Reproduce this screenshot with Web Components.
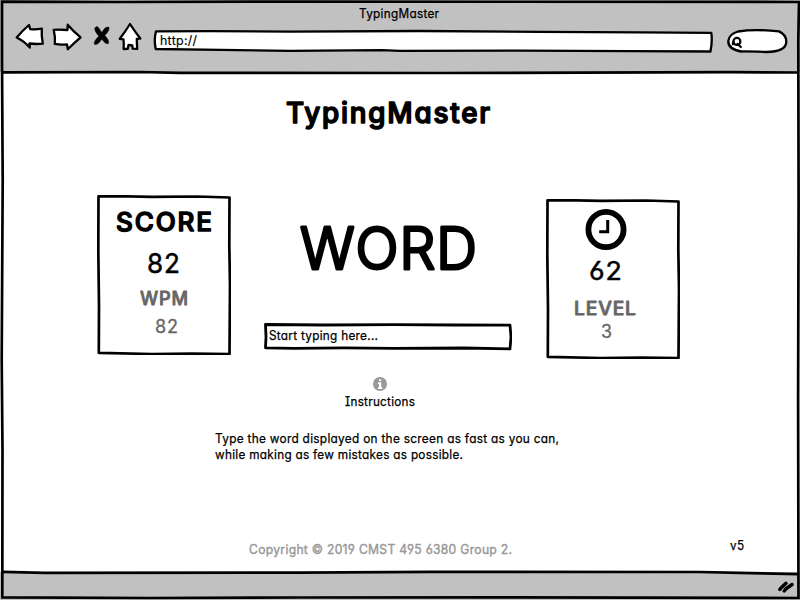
<!DOCTYPE html>
<html lang="en"><head><meta charset="utf-8"><title>TypingMaster</title>
<style>html,body{margin:0;width:800px;height:600px;overflow:hidden;background:#fff;font-family:Inter,Lato,sans-serif}</style></head>
<body><typing-app></typing-app>
<script>
// A line of lettering fitted to a given width, with softly rounded strokes.
class FitText extends HTMLElement{
  connectedCallback(){
    const g=(n,d)=>this.getAttribute(n)??d;
    const w=+g('w'),s=+g('size',13),k=+g('ink',0.25),gap=+g('gap',.3);
    this.attachShadow({mode:'open'}).innerHTML=`<style>
    :host{display:block;flex:none;width:${w}px;height:${s}px}
    svg{display:block;overflow:visible}
    text{font-family:Inter,Lato,sans-serif;font-feature-settings:"cv11","cv08","cv03","cv04";font-size:${s}px;letter-spacing:${gap}px;font-weight:${g('weight',400)};fill:${g('color','#000')};stroke:${g('color','#000')};stroke-width:${k};stroke-linejoin:round;stroke-linecap:round}
    </style><svg width="${w}" height="${s}"><text x="0" y="${s*.8}" textLength="${w+gap}" lengthAdjust="spacingAndGlyphs">${this.textContent}</text></svg>`;
  }
}
customElements.define('fit-text',FitText);

const define=(name,html)=>customElements.define(name,class extends HTMLElement{
  constructor(){super();this.attachShadow({mode:'open'}).innerHTML=html}
});

define('nav-icons',`<style>:host{display:block;width:128px;height:32px;flex:none}svg{display:block}</style>
<svg width="128" height="32" viewBox="15 22 128 32" fill="#fff" stroke="#000" stroke-width="2.3" stroke-linejoin="round" stroke-linecap="round">
<path d="M16.7 37.5Q22 31 29 25L30.2 29.2Q36 29.8 41.8 28.6Q41.3 36 42.8 43.6Q36 44.4 29.5 43.5L29.8 47.6Q24 41 16.7 37.5Z"/>
<path d="M53.7 29.8Q60 29.5 67.5 30L67.7 24.7Q73 31 80.6 37.3Q74 43 67.8 49.2L67 44.4Q60 45 54.8 43.8Q55.5 37 53.7 29.8Z"/>
<path fill="#000" stroke-width=".5" d="M94.9 28.2Q96 25.8 98 27L101.8 32.5Q105.5 26 109 27.3Q110 30 104.8 35.6Q109.3 40 108.6 43.3Q106 45.2 101.8 39Q98 45.6 94.4 44.2Q93.3 41.5 98.8 36.2Q94 30.5 94.9 28.2Z"/>
<path d="M130 24Q134.5 31 140.3 38.5L136.8 38.8Q136.8 43 137.2 48.8L132.6 48.7L132.3 45.3L128.5 45L127.7 48.9L123.6 49Q124 44 123.5 39.3L119.8 38.8Q125 32 130 24Z"/></svg>`);

define('address-bar',`<style>:host{display:grid;width:560px;height:24px;flex:none}svg{grid-area:1/1;display:block}::slotted(*){grid-area:1/1;margin:6px 0 0 7px}</style>
<svg width="560" height="24" viewBox="153 29 560 24" fill="#fff" stroke="#000" stroke-width="2.3" stroke-linejoin="round"><path d="M156 31.3L210 31.2L290 31.6L420 31L540 31.9L640 32.3L711.3 32.8Q712.5 41 710.5 51.5L630 51.2L520 50.7L400 50.9L382 50.2L290 50.8L220 49.8L155.7 49Q153.7 39 156 31.3Z"/></svg><slot></slot>`);

define('search-box',`<style>:host{display:block;width:62px;height:28px;flex:none}svg{display:block}</style>
<svg width="62" height="28" viewBox="727 27 62 28" fill="#fff" stroke="#000" stroke-width="2.3" stroke-linecap="round"><path d="M738 31.5Q755 28.8 779 31.4Q787 35 786.2 43Q785 51.5 767 52Q748 51.3 741 51.5Q728 49 728.3 41Q729 34 738 31.5Z"/><circle cx="736.9" cy="41.4" r="3.5" stroke-width="2.2"/><path d="M737.6 44L740.8 47M732.8 44.3L733.4 42" stroke-width="2.2"/></svg>`);

define('sketch-card',`<style>:host{display:grid;width:134px;height:160px;flex:none}svg{grid-area:1/1}div{grid-area:1/1;display:flex;flex-direction:column;align-items:center}</style>
<svg width="134" height="160" fill="#fff" stroke="#000" stroke-width="2.7" stroke-linejoin="round"><path d="M1.5 1.4L20 1.2L55 1.8L100 1.5L132.5 2.5L132.3 50L133 90L132.5 159L95 158.5L55 159L1.8 157.8L2 110L1.3 55Z"/></svg><div><slot></slot></div>`);

define('clock-icon',`<style>:host{display:block;width:42px;height:42px;flex:none}svg{display:block}</style>
<svg width="42" height="42" fill="none" stroke="#000"><circle cx="21" cy="20.5" r="17.6" stroke-width="5.8"/><path d="M22.7 11V22.7H14.2" stroke-width="3"/></svg>`);

define('info-icon',`<style>:host{display:block;width:14px;height:14px;flex:none}svg{display:block}</style>
<svg width="14" height="14"><circle cx="7" cy="7" r="7" fill="#999"/><path d="M6 2.2h2.2v1.9H6zM5 5.3h3.3v5h1V12H5v-1.7h1V7H5z" fill="#fff"/></svg>`);

define('type-field',`<style>:host{display:grid;width:248px;height:28px;flex:none}svg{grid-area:1/1}::slotted(*){grid-area:1/1;margin:7px 0 0 5px}</style>
<svg width="248" height="28" fill="#fff" stroke="#000" stroke-width="2.8" stroke-linejoin="round"><path d="M1.5 1.5L60 2L130 1.6L190 2L246 2.2L247 14L246 25.8L200 25L130 25.4L80 24.9L30 25.4L1.5 24.8L2 14Z"/></svg><slot></slot>`);

define('typing-app',`<style>
:host{display:grid;grid-template-rows:72px 500px 28px;width:800px;height:600px;position:relative}
header,footer{background:#c1c1c1}
header{display:flex;flex-direction:column;align-items:center}
header>fit-text{margin:7.6px 3px 0 0}
.tools{display:flex;width:774px;height:32px;margin:1.9px 1px 0 0;padding-left:4px}
.tools address-bar{margin:7px 0 0 10px}.tools search-box{margin:5px 0 0 14px}
main{display:grid;grid-template-rows:123px 240px 110px 27px;padding:0 54px 0 97px}
.title{padding:28.8px 0 0 188.5px}
.row{display:grid;grid-template-columns:167px 282px 134px}
.mid{display:flex;flex-direction:column;align-items:flex-start}
.help{padding:0 0 0 118px;margin-top:-2px}
.help fit-text+fit-text{margin-top:3.5px}
.foot{display:flex;justify-content:space-between;margin:-1px 0 0 152px}
.foot :last-child{margin:-4.2px 2px 0 0}
footer{display:flex;justify-content:flex-end}
footer svg{margin:6.5px 6px 0 0}
.frame{position:absolute;inset:0;pointer-events:none}
</style>
<header><fit-text w="80" size="12.5">TypingMaster</fit-text>
<div class="tools"><nav-icons></nav-icons><address-bar><fit-text w="37" size="12.5" ink=".15">http://</fit-text></address-bar><search-box></search-box></div></header>
<main>
<div class="title"><fit-text w="204" size="28" weight="500" ink="1.5" gap="1.8">TypingMaster</fit-text></div>
<div class="row">
<sketch-card><fit-text w="96" size="25" weight="500" ink="1.4" gap="1.8" style="margin-top:16.3px">SCORE</fit-text>
<fit-text w="33" size="26.5" ink=".5" gap="1" style="margin:16.2px 1px 0 0">82</fit-text>
<fit-text w="48" size="18" weight="500" color="#666" ink=".8" gap=".8" style="margin-top:12px">WPM</fit-text>
<fit-text w="23" size="18" color="#666" ink=".3" gap=".8" style="margin:10px 0 0 4px">82</fit-text></sketch-card>
<div class="mid">
<fit-text w="177" size="58" weight="300" ink="3" gap="1" style="margin:28px 0 0 36px">WORD</fit-text>
<type-field style="margin-top:41.5px"><fit-text w="109" size="12.5">Start typing here...</fit-text></type-field>
<info-icon style="margin:26.5px 0 0 109px"></info-icon>
<fit-text w="70" size="12.5" style="margin:4.7px 0 0 81px">Instructions</fit-text></div>
<sketch-card style="margin-top:4px"><clock-icon style="margin:9.5px 15px 0 0"></clock-icon>
<fit-text w="33" size="25.5" ink=".5" gap="1" style="margin:9.5px 16px 0 0">62</fit-text>
<fit-text w="62" size="18" weight="500" color="#666" ink=".8" gap=".8" style="margin:15.5px 16px 0 0">LEVEL</fit-text>
<fit-text w="11" size="18" color="#666" ink=".3" style="margin:5.3px 14px 0 0">3</fit-text></sketch-card>
</div>
<div class="help"><fit-text w="344" size="12.5">Type the word displayed on the screen as fast as you can,</fit-text><fit-text w="248" size="12.5">while making as few mistakes as possible.</fit-text></div>
<div class="foot"><fit-text w="263" size="12.5" color="#999" ink=".4">Copyright © 2019 CMST 495 6380 Group 2.</fit-text><fit-text w="14" size="12.5">v5</fit-text></div>
</main>
<footer><svg width="16" height="16" fill="none" stroke="#000" stroke-width="3.4" stroke-linecap="round"><path d="M1.8 10.5L3 9L8 4.3M6.2 12L8 9.8L14 5.5"/></svg></footer>
<svg class="frame" width="800" height="600" fill="none" stroke="#000" stroke-width="2.7"><path d="M2 1.7L120 2L300 1.6L799 2L798.3 40L798.6 200L798.1 400L798.5 598L500 597.4L300 597.5L150 598L2.3 597.3L2.5 450L1.7 360L2.7 180L2 60Z"/><path d="M3 72.3L140 72L180 72.8L440 73L730 72.2L798 72.5M3 571.8L45 572.8L300 572.6L430 571.8L700 572L740 572.8L798 574.2"/></svg>`);
</script></body></html>
